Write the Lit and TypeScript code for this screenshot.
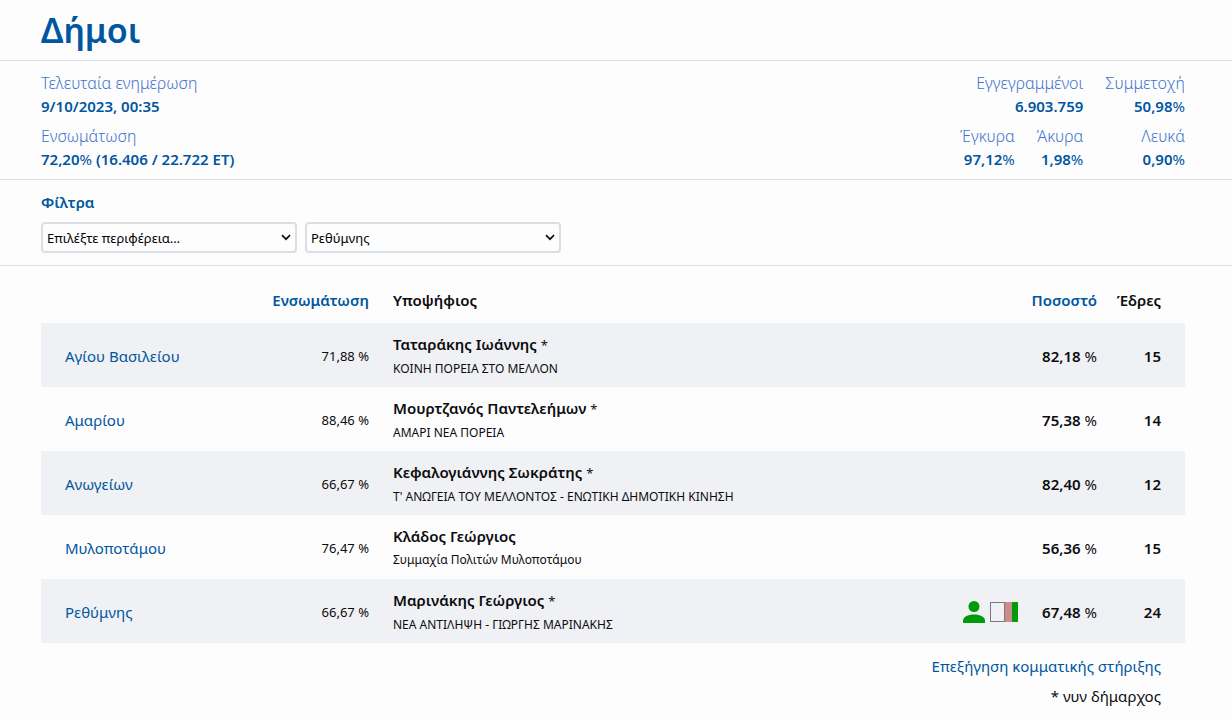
import { LitElement, html, css, nothing } from "lit";
import { customElement } from "lit/decorators.js";

interface Row {
  name: string;
  counted: string;
  candidate: string;
  incumbent: boolean;
  list: string;
  percent: string;
  seats: number;
  supported?: boolean;
}

const ROWS: Row[] = [
  { name: "Αγίου Βασιλείου", counted: "71,88", candidate: "Ταταράκης Ιωάννης", incumbent: true, list: "ΚΟΙΝΗ ΠΟΡΕΙΑ ΣΤΟ ΜΕΛΛΟΝ", percent: "82,18", seats: 15 },
  { name: "Αμαρίου", counted: "88,46", candidate: "Μουρτζανός Παντελεήμων", incumbent: true, list: "ΑΜΑΡΙ ΝΕΑ ΠΟΡΕΙΑ", percent: "75,38", seats: 14 },
  { name: "Ανωγείων", counted: "66,67", candidate: "Κεφαλογιάννης Σωκράτης", incumbent: true, list: "Τ' ΑΝΩΓΕΙΑ ΤΟΥ ΜΕΛΛΟΝΤΟΣ - ΕΝΩΤΙΚΗ ΔΗΜΟΤΙΚΗ ΚΙΝΗΣΗ", percent: "82,40", seats: 12 },
  { name: "Μυλοποτάμου", counted: "76,47", candidate: "Κλάδος Γεώργιος", incumbent: false, list: "Συμμαχία Πολιτών Μυλοποτάμου", percent: "56,36", seats: 15 },
  { name: "Ρεθύμνης", counted: "66,67", candidate: "Μαρινάκης Γεώργιος", incumbent: true, list: "ΝΕΑ ΑΝΤΙΛΗΨΗ - ΓΙΩΡΓΗΣ ΜΑΡΙΝΑΚΗΣ", percent: "67,48", seats: 24, supported: true },
];

@customElement("app-root")
export class AppRoot extends LitElement {
  static styles = css`
    :host {
      display: block;
      min-height: 100vh;
      background: #fdfdfe;
      color: #0c0c0e;
      font-family: "Noto Sans", "Open Sans", sans-serif;
      font-size: 15px;
      line-height: 22px;
    }
    .band {
      padding: 0 47px 0 41px;
      border-bottom: 1px solid #dadee5;
    }
    h1 {
      margin: 0;
      padding: 7px 0;
      font-size: 34px;
      line-height: 46px;
      font-weight: 600;
      color: #0056a0;
    }
    .summary {
      display: flex;
      justify-content: space-between;
      padding-top: 11px;
      padding-bottom: 9px;
    }
    dl, dd { margin: 0; }
    dl {
      display: grid;
      row-gap: 8px;
    }
    dt {
      font-size: 16px;
      line-height: 23px;
      font-weight: 300;
      color: #3f73cc;
    }
    dd {
      font-weight: 600;
      color: #0056a0;
    }
    .figures {
      grid-template-columns: auto auto auto;
      column-gap: 22px;
      text-align: right;
    }
    .wide { grid-column: span 2; }
    .sign { font-weight: 400; }
    .filters {
      padding-top: 11px;
      padding-bottom: 12px;
    }
    h2 {
      margin: 0 0 9px;
      font-size: 15px;
      line-height: 22px;
      font-weight: 600;
      color: #0056a0;
    }
    .selects { display: flex; gap: 8px; }
    select {
      appearance: none;
      width: 256px;
      height: 31px;
      padding: 0 20px 0 4px;
      border: 2px solid #dadee5;
      border-radius: 4px;
      background: #fdfdfe url("data:image/svg+xml,%3Csvg xmlns='http://www.w3.org/2000/svg' width='10' height='7' viewBox='0 0 10 7'%3E%3Cpath d='M1 1.200l4 4 4-4' fill='none' stroke='%23111' stroke-width='1.700'/%3E%3C/svg%3E") no-repeat right 4px center;
      color: #000;
      font-family: inherit;
      font-size: 13px;
    }
    .results { padding: 12px 47px 12px 41px; }
    table {
      width: 100%;
      border-collapse: collapse;
    }
    th, td {
      padding: 0 0 0 24px;
      text-align: left;
    }
    th {
      height: 44px;
      padding-bottom: 1px;
      font-weight: 600;
    }
    td {
      height: 62px;
      padding-top: 2px;
    }
    tbody tr:nth-child(odd) { background: #f0f1f4; }
    .num { text-align: right; white-space: nowrap; }
    .sorted { color: #0056a0; }
    .c-name { width: 180px; }
    .c-counted { width: 148px; }
    .c-percent { width: 172px; }
    .c-seats { width: 88px; }
    .counted { font-size: 13px; }
    .last { padding-left: 0; padding-right: 24px; }
    a { color: #0056a0; text-decoration: none; }
    .candidate { font-weight: 600; line-height: 24px; }
    .star { font-weight: 400; font-size: 13px; }
    .list { font-size: 12px; line-height: 24px; }
    .score {
      display: flex;
      justify-content: flex-end;
      align-items: center;
      gap: 24px;
    }
    .strong { font-weight: 600; }
    .support { display: flex; gap: 4px; align-items: center; }
    .support svg { display: block; }
    .notes {
      padding: 8px 24px 0;
      text-align: right;
      line-height: 30px;
    }
    .notes p { margin: 0; }
  `;

  private stat(label: string, value: string, percent = false, wide = false) {
    return html`<div class=${wide ? "wide" : "single"}>
      <dt>${label}</dt>
      <dd>${value}${percent ? html`<span class="sign">%</span>` : nothing}</dd>
    </div>`;
  }

  private support() {
    return html`<span class="support">
      <svg width="24" height="22" viewBox="0 0 24 22" role="img" aria-label="Υποψήφιος">
        <g fill="#009b0a">
          <circle cx="12" cy="5.5" r="5.5"></circle>
          <path d="M1 22v-2.200C1 16 5.500 13.500 12 13.500s11 2.500 11 6.300V22z"></path>
        </g>
      </svg>
      <svg width="28" height="20" viewBox="0 0 28 20" role="img" aria-label="Στήριξη">
        <rect x="15" width="7" height="20" fill="#cd8c8c"></rect>
        <rect x="22" width="6" height="20" fill="#009b0a"></rect>
        <rect x="0.500" y="0.500" width="14" height="19" fill="#f0f1f4" stroke="#777a80"></rect>
      </svg>
    </span>`;
  }

  private row(r: Row) {
    return html`<tr>
      <td><a href="#">${r.name}</a></td>
      <td class="num counted">${r.counted} %</td>
      <td>
        <div class="candidate">${r.candidate}${r.incumbent ? html` <span class="star">*</span>` : nothing}</div>
        <div class="list">${r.list}</div>
      </td>
      <td class="num">
        <div class="score">${r.supported ? this.support() : nothing}<span><span class="strong">${r.percent}</span> <span class="unit">%</span></span></div>
      </td>
      <td class="num last strong">${r.seats}</td>
    </tr>`;
  }

  render() {
    return html`
      <header class="band"><h1>Δήμοι</h1></header>
      <section class="band summary">
        <dl>
          ${this.stat("Τελευταία ενημέρωση", "9/10/2023, 00:35")}
          <div>
            <dt>Ενσωμάτωση</dt>
            <dd>72,20<span class="sign">%</span> (16.406 / 22.722 ΕΤ)</dd>
          </div>
        </dl>
        <dl class="figures">
          ${this.stat("Εγγεγραμμένοι", "6.903.759", false, true)}
          ${this.stat("Συμμετοχή", "50,98", true)}
          ${this.stat("Έγκυρα", "97,12", true)}
          ${this.stat("Άκυρα", "1,98", true)}
          ${this.stat("Λευκά", "0,90", true)}
        </dl>
      </section>
      <section class="band filters">
        <h2>Φίλτρα</h2>
        <div class="selects">
          <select aria-label="Περιφέρεια"><option>Επιλέξτε περιφέρεια...</option></select>
          <select aria-label="Περιφερειακή ενότητα"><option>Ρεθύμνης</option></select>
        </div>
      </section>
      <main class="results">
        <table>
          <colgroup>
            <col class="c-name"><col class="c-counted"><col><col class="c-percent"><col class="c-seats">
          </colgroup>
          <thead>
            <tr>
              <th></th>
              <th class="num sorted">Ενσωμάτωση</th>
              <th>Υποψήφιος</th>
              <th class="num sorted">Ποσοστό</th>
              <th class="num last">Έδρες</th>
            </tr>
          </thead>
          <tbody>${ROWS.map((r) => this.row(r))}</tbody>
        </table>
        <div class="notes">
          <p><a href="#">Επεξήγηση κομματικής στήριξης</a></p>
          <p>* νυν δήμαρχος</p>
        </div>
      </main>
    `;
  }
}
